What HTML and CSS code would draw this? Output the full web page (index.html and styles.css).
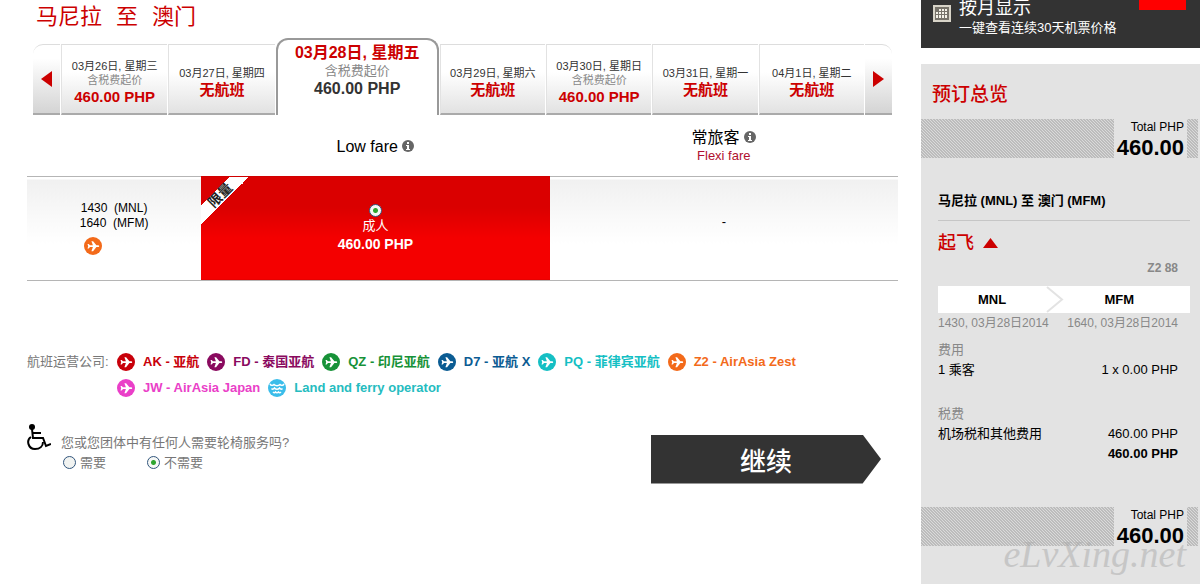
FILE: index.html
```html
<!DOCTYPE html>
<html lang="zh-CN">
<head>
  <meta charset="UTF-8" />
  <meta name="viewport" content="width=device-width, initial-scale=1.0"/>
  <title>马尼拉 至 澳门</title>
  <link rel="stylesheet" href="styles.css">
</head>
<body>
  <svg class="defs" aria-hidden="true">
    <symbol id="plane" viewBox="0 0 18 18">
      <circle cx="9" cy="9" r="9" fill="currentColor"/>
      <path fill="#fff" d="M3.500 7h1.200l1.300 1.300h2.900L7.400 4.200h1.700l3.300 4.100h1.300c.9 0 1.500.4 1.500.9s-.6.900-1.500.900h-1.300l-3.300 4.100H7.400l1.500-4.100H6l-1.300 1.300H3.500l.7-2.200z"/>
    </symbol>
    <symbol id="info" viewBox="0 0 12 12">
      <circle cx="6" cy="6" r="6" fill="#666"/>
      <path fill="#fff" d="M5 2h2v2H5zM4 5h3v4h1v1H4V9h1V6H4z"/>
    </symbol>
  </svg>

  <div class="page">
    <main>
      <h1><span>马尼拉</span><span>至</span><span>澳门</span></h1>

      <nav class="dates">
        <a href="#" class="arrow prev" aria-label="前一周"><svg width="11" height="16" viewBox="0 0 11 16"><path fill="#c00" d="M0 8 11 0v16z"/></svg></a>
        <a href="#" class="day"><span>03月26日, 星期三</span><small>含税费起价</small><b>460.00 PHP</b></a>
        <a href="#" class="day"><span>03月27日, 星期四</span><b>无航班</b></a>
        <a href="#" class="day active"><span>03月28日, 星期五</span><small>含税费起价</small><b>460.00 PHP</b></a>
        <a href="#" class="day"><span>03月29日, 星期六</span><b>无航班</b></a>
        <a href="#" class="day"><span>03月30日, 星期日</span><small>含税费起价</small><b>460.00 PHP</b></a>
        <a href="#" class="day"><span>03月31日, 星期一</span><b>无航班</b></a>
        <a href="#" class="day"><span>04月1日, 星期二</span><b>无航班</b></a>
        <a href="#" class="arrow next" aria-label="后一周"><svg width="11" height="16" viewBox="0 0 11 16"><path fill="#c00" d="M11 8 0 0v16z"/></svg></a>
      </nav>

      <table class="fares">
        <thead>
          <tr>
            <td></td>
            <th scope="col">Low fare <svg class="info"><use href="#info"/></svg></th>
            <th scope="col">常旅客 <svg class="info"><use href="#info"/></svg><span class="flexi">Flexi fare</span></th>
          </tr>
        </thead>
        <tbody>
          <tr>
            <td class="times">
              <div>1430 &nbsp;(MNL)</div>
              <div>1640 &nbsp;(MFM)</div>
              <svg class="plane z2"><use href="#plane"/></svg>
            </td>
            <td class="selected">
              <div class="ribbon"><span>限量</span></div>
              <label>
                <input type="radio" name="fare" checked />
                <span>成人</span>
                <b>460.00 PHP</b>
              </label>
            </td>
            <td class="none">-</td>
          </tr>
        </tbody>
      </table>

      <section class="carriers">
        <span class="carriers-title">航班运营公司:</span>
        <ul>
          <li class="ak"><svg class="plane"><use href="#plane"/></svg>AK - 亚航</li>
          <li class="fd"><svg class="plane"><use href="#plane"/></svg>FD - 泰国亚航</li>
          <li class="qz"><svg class="plane"><use href="#plane"/></svg>QZ - 印尼亚航</li>
          <li class="d7"><svg class="plane"><use href="#plane"/></svg>D7 - 亚航 X</li>
          <li class="pq"><svg class="plane"><use href="#plane"/></svg>PQ - 菲律宾亚航</li>
          <li class="z2"><svg class="plane"><use href="#plane"/></svg>Z2 - AirAsia Zest</li>
          <li class="jw"><svg class="plane"><use href="#plane"/></svg>JW - AirAsia Japan</li>
          <li class="ferry">
            <svg class="plane" viewBox="0 0 18 18">
              <circle cx="9" cy="9" r="9" fill="#3bbdea"/>
              <path fill="none" stroke="#fff" stroke-width="1.5" d="M2 5q1.500 2.500 4 .5 3 2.500 6 0 2.500 2 4-.5M3.500 9.500q1.500 1.500 3-.5 2.500 2.500 5 0 1.500 2 3 .5M5 13q1.500 1.500 2.500 0 1.500 1.500 3 0 1 1.500 2.500 0"/>
            </svg>Land and ferry operator
          </li>
        </ul>
      </section>

      <form class="bottom">
        <svg class="wheelchair" viewBox="0 0 24 26">
          <circle cx="5" cy="3" r="3"/>
          <path fill="none" stroke="#000" stroke-width="2" d="M5 5l1 9h10l3 8 5-2M6 9h8"/>
          <path fill="none" stroke="#000" stroke-width="2" d="M4 13C-1 16 1 25 8 25c5 0 8-3 8-7"/>
        </svg>
        <fieldset>
          <legend>您或您团体中有任何人需要轮椅服务吗?</legend>
          <div class="choices">
            <label><input type="radio" name="wheelchair" value="yes" />需要</label>
            <label><input type="radio" name="wheelchair" value="no" checked />不需要</label>
          </div>
        </fieldset>
        <button type="button" class="continue">继续</button>
      </form>
    </main>

    <aside>
      <a href="#" class="month">
        <svg class="calendar" viewBox="0 0 18 17">
          <path fill="#d8d4c8" d="M0 0h18v17H0z"/>
          <path fill="#77736a" d="M2 2h14v13H2z"/>
          <path fill="#f4f1e8" d="M6 4h2v2H6zM9 4h2v2H9zM12 4h2v2h-2zM3 7h2v2H3zM6 7h2v2H6zM9 7h2v2H9zM12 7h2v2h-2zM3 10h2v3H3zM6 10h2v3H6zM9 10h2v3H9zM12 10h2v3h-2z"/>
        </svg>
        <span class="month-text"><strong>按月显示</strong><span>一键查看连续30天机票价格</span></span>
        <span class="flag"></span>
      </a>

      <section class="summary">
        <h2>预订总览</h2>
        <div class="total"><div><span>Total PHP</span><b>460.00</b></div></div>

        <div class="details">
          <h3>马尼拉 (MNL) 至 澳门 (MFM)</h3>
          <h4>起飞 <svg width="15" height="10" viewBox="0 0 15 10"><path fill="#c00" d="M7.500 0 15 10H0z"/></svg></h4>
          <p class="flight">Z2 88</p>
          <div class="route">
            <b>MNL</b>
            <svg width="18" height="27" viewBox="0 0 18 27"><path fill="none" stroke="#e3e3e3" stroke-width="2" d="M1 1l15 12.500L1 26"/></svg>
            <b>MFM</b>
          </div>
          <div class="when"><span>1430, 03月28日2014</span><span>1640, 03月28日2014</span></div>
          <h5>费用</h5>
          <div class="line"><span>1 乘客</span><span>1 x 0.00 PHP</span></div>
          <h5 class="tax">税费</h5>
          <div class="line"><span>机场税和其他费用</span><span>460.00 PHP</span></div>
          <div class="line sum"><b>460.00 PHP</b></div>
        </div>

        <div class="total"><div><span>Total PHP</span><b>460.00</b></div></div>
        <span class="watermark">eLvXing.net</span>
      </section>
    </aside>
  </div>
</body>
</html>
```
FILE: styles.css
```css
* {
  box-sizing: border-box;
}
body {
  margin: 0;
  background: #fff;
  color: #000;
  font: 13px/20px "Liberation Sans", "Noto Sans CJK SC", sans-serif;
}
h1, h2, h3, h4, h5, p, ul, fieldset, legend {
  margin: 0;
  padding: 0;
  border: 0;
}
a {
  color: inherit;
  text-decoration: none;
}
.defs {
  display: none;
}
.page {
  display: flex;
  gap: 23px;
  min-height: 100vh;
  padding-right: 3px;
}
main {
  flex: 1;
  min-width: 0;
  padding-left: 27px;
}
h1 {
  display: flex;
  gap: 14px;
  padding: 6px 9px 10px;
  color: #c00;
  font-size: 22px;
  font-weight: normal;
  line-height: 22px;
}

/* date tabs */
.dates {
  display: grid;
  grid-template-columns: 27px 106fr 106fr 163px 105fr 105fr 105fr 105fr 27px;
  gap: 1px;
  align-items: end;
  margin: 0 6px;
}
.day, .arrow {
  display: flex;
  flex-direction: column;
  align-items: center;
  justify-content: center;
  height: 71px;
  border-top: 1px solid #ddd;
  border-bottom: 2px solid #aaa;
  background: linear-gradient(#fff 40%, #e2e2e2);
}
.day {
  padding-top: 8px;
  border-left: 1px solid #e2e2e2;
  font-size: 11px;
  line-height: 14px;
  white-space: nowrap;
  color: #333;
}
.day small {
  color: #888;
  font-size: 11px;
}
.day b {
  color: #c00;
  font-size: 15px;
  line-height: 20px;
}
.arrow {
  background: linear-gradient(#fff 20%, #d4d4d4);
}
.prev {
  border-top-left-radius: 10px;
}
.next {
  border-top-right-radius: 10px;
}
.day.active {
  justify-content: flex-start;
  height: 77px;
  padding-top: 4px;
  border: 2px solid #999;
  border-bottom: 0;
  border-radius: 12px 12px 0 0;
  background: #fff;
  line-height: 18px;
}
.active span {
  color: #c00;
  font-size: 16px;
  font-weight: bold;
}
.day.active small {
  font-size: 13px;
}
.day.active b {
  color: #333;
  font-size: 16px;
  line-height: 18px;
}

/* fares */
.fares {
  width: 100%;
  table-layout: fixed;
  border-collapse: collapse;
  text-align: center;
}
.fares td, .fares th {
  padding: 0;
}
.fares td:first-child {
  width: 20%;
}
.fares thead {
  height: 61px;
}
.fares th {
  padding-top: 4px;
  font-size: 16px;
  font-weight: normal;
  line-height: 18px;
}
.info {
  width: 12px;
  height: 12px;
}
.flexi {
  display: block;
  color: #b01030;
  font-size: 13px;
}
.fares tbody td {
  height: 104px;
  border-top: 1px solid #b5b5b5;
  border-bottom: 1px solid #b5b5b5;
  background: linear-gradient(#fff 3px, #f0f0f0 3px, #fff 65%);
}
.fares .times {
  line-height: 15px;
  font-size: 12px;
}
.times .plane {
  margin: 6px 0 0 57px;
}
.plane {
  display: block;
  flex: none;
  width: 18px;
  height: 18px;
}
.fares tbody .selected {
  position: relative;
  border-top-color: #d00000;
  background: linear-gradient(#da0000 30%, #f40000 60%);
  color: #fff;
}
.selected label {
  display: flex;
  flex-direction: column;
  align-items: center;
  line-height: 18px;
}
.selected input {
  margin-bottom: 3px;
}
.selected b {
  font-size: 14px;
}
.fares .none {
  padding-bottom: 12px;
}
.ribbon {
  position: absolute;
  top: 0;
  left: 0;
  width: 48px;
  height: 48px;
  overflow: hidden;
  background: linear-gradient(135deg, transparent 30%, #fff 30%, #fff 50%, transparent 50%);
}
.ribbon span {
  position: absolute;
  top: 10px;
  left: 3px;
  width: 32px;
  color: #222;
  font-size: 14px;
  font-weight: bold;
  line-height: 16px;
  transform: rotate(-45deg);
}
input[type="radio"] {
  appearance: none;
  width: 13px;
  height: 13px;
  margin: 0;
  border: 1px solid #31557c;
  border-radius: 50%;
  background: #f1f3f1;
}
input[type="radio"]:checked {
  background: radial-gradient(circle, #2fa52f 2px, #f6f8f6 3px);
}

/* carriers */
.carriers {
  display: flex;
  gap: 7px;
  margin-top: 68px;
  line-height: 26px;
}
.carriers-title {
  flex: none;
  width: 83px;
  color: #777;
  white-space: nowrap;
}
.carriers ul {
  display: flex;
  flex-wrap: wrap;
  column-gap: 8px;
  list-style: none;
  font-weight: bold;
}
.carriers li {
  display: flex;
  align-items: center;
  gap: 8px;
}
.ak { color: #c8000a; }
.fd { color: #8a0a5f; }
.qz { color: #179238; }
.d7 { color: #0b5c93; }
.pq { color: #15bfc4; }
.z2 { color: #f36a1a; }
.jw { color: #ea3fc8; }
.ferry { color: #25bcc0; }

/* wheelchair question and continue */
.bottom {
  display: flex;
  align-items: flex-start;
  margin-top: 23px;
  padding-right: 17px;
  color: #777;
}
.wheelchair {
  width: 24px;
  height: 26px;
}
.bottom fieldset {
  flex: 1;
  padding: 9px 0 0 10px;
}
.bottom legend {
  float: left;
}
.choices {
  display: flex;
  clear: both;
  gap: 41px;
  padding-left: 2px;
}
.choices label {
  display: flex;
  align-items: center;
  gap: 4px;
}
.continue {
  width: 230px;
  height: 49px;
  margin-top: 11px;
  border: 0;
  background: #333;
  clip-path: polygon(0 0, 92% 0, 100% 50%, 92% 100%, 0 100%);
  color: #fff;
  font: 500 26px "Liberation Sans", "Noto Sans CJK SC", sans-serif;
  cursor: pointer;
}

/* sidebar */
aside {
  display: flex;
  flex-direction: column;
  gap: 16px;
  flex: none;
  width: 279px;
}
.month {
  display: flex;
  align-items: flex-start;
  gap: 8px;
  height: 48px;
  padding: 0 14px 0 12px;
  background: #333;
  color: #fff;
}
.calendar {
  width: 18px;
  height: 17px;
  margin-top: 5px;
}
.month-text {
  display: flex;
  flex: 1;
  flex-direction: column;
  white-space: nowrap;
}
.month strong {
  font-size: 18px;
  font-weight: normal;
  line-height: 16px;
}
.month-text span {
  line-height: 24px;
}
.flag {
  width: 47px;
  height: 10px;
  margin-left: -47px;
  background: #f00;
}
.summary {
  position: relative;
  flex: 1;
  padding-top: 21px;
  background: #e3e3e3;
}
.summary h2 {
  padding-left: 11px;
  color: #c00;
  font-size: 19px;
  font-weight: 500;
  line-height: 20px;
}
.total {
  display: flex;
  justify-content: flex-end;
  margin: 14px 2px 0 0;
  padding-right: 11px;
  background: linear-gradient(45deg, #bcbcbc 25%, #dadada 25%, #dadada 50%, #bcbcbc 50%, #bcbcbc 75%, #dadada 75%);
  background-size: 3px 3px;
}
.total div {
  display: flex;
  flex-direction: column;
  width: 73px;
  height: 39px;
  padding-right: 3px;
  background: #e3e3e3;
  text-align: right;
  font-size: 12px;
  line-height: 16px;
}
.total b {
  font-size: 22px;
  line-height: 25px;
}
.details {
  padding: 33px 10px 29px 17px;
}
.details h3 {
  padding-bottom: 9px;
  border-bottom: 1px solid #c6c6c6;
  font-size: 13px;
}
.details h4 {
  display: flex;
  align-items: center;
  gap: 9px;
  padding-top: 12px;
  color: #c00;
  font-size: 18px;
  font-weight: 500;
}
.flight {
  padding: 5px 12px 8px 0;
  color: #888;
  font-size: 12px;
  font-weight: bold;
  text-align: right;
}
.route {
  display: flex;
  justify-content: space-between;
  align-items: center;
  height: 27px;
  padding: 0 56px 0 40px;
  background: #fff;
}
.when {
  display: flex;
  justify-content: space-between;
  padding-right: 12px;
  color: #888;
  font-size: 12px;
  white-space: nowrap;
}
.details h5 {
  padding-top: 6px;
  color: #888;
  font-size: 13px;
  font-weight: normal;
  line-height: 21px;
}
.details .tax {
  padding-top: 23px;
}
.line {
  display: flex;
  justify-content: space-between;
  padding-right: 12px;
}
.sum {
  justify-content: flex-end;
}
.watermark {
  position: absolute;
  right: 14px;
  bottom: 11px;
  color: #aaa;
  font: italic 38px/38px "Liberation Serif", cursive;
  opacity: 0.5;
}
```
